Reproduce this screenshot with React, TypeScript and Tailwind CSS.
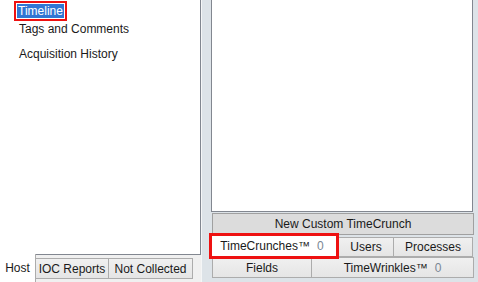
import React from 'react';

const tabBase =
  'flex items-center justify-center border border-[#acacac] bg-gradient-to-b from-[#f0f0f0] to-[#e5e5e5] text-[12px] text-[#1a1a1a] leading-none';

export default function App() {
  return (
    <div
      className="w-[478px] h-[282px] flex bg-[#f0f0f0] overflow-hidden"
      style={{ fontFamily: '"Liberation Sans", Arial, sans-serif' }}
    >
      {/* Left: host tree */}
      <div className="w-[201px] flex flex-col shrink-0">
        <div className="h-[255px] bg-white border-r border-b border-[#828790] text-[12px] text-[#1a1a1a] pl-[19px] pt-[4px]">
          <div className="h-[14px] flex items-center">
            <span className="bg-[#3176d4] text-white px-[1px] -ml-[2px] leading-[14px] outline-2 outline-[#ee1111] outline-offset-[1px]">
              Timeline
            </span>
          </div>
          <div className="h-[20px] flex items-center mt-[1px]">Tags and Comments</div>
          <div className="h-[20px] flex items-center mt-[5px]">Acquisition History</div>
        </div>
        <div className="flex items-start -mt-[1px]">
          <div className="w-[36px] h-[28px] bg-white border-r border-[#acacac] flex items-center justify-center text-[12px] text-[#1a1a1a] pb-[1px]">
            Host
          </div>
          <div className={`${tabBase} w-[73px] h-[21px] mt-[4px] border-l-0`}>IOC Reports</div>
          <div className={`${tabBase} w-[84px] h-[21px] mt-[4px] border-l-0`}>Not Collected</div>
        </div>
      </div>

      {/* Splitter */}
      <div className="w-[9px] shrink-0 bg-[#dde3e8] border-l border-[#f5f6f7]" />

      {/* Right: timecrunch list */}
      <div className="flex-1 flex flex-col bg-[#dde3e8] pl-[1px]">
        <div className="h-[212px] w-[262px] bg-white border border-t-0 border-[#828790]" />
        <div className="w-[262px] h-[22px] mt-[1px] ml-[1px] bg-[#dcdcdc] border border-[#a0a0a0] flex items-center justify-center text-[12px] text-[#1a1a1a]">
          New Custom TimeCrunch
        </div>
        <div className="flex items-start -ml-[2px]">
          <div className="w-[130px] h-[26px] -mt-[2px] bg-white border-[3px] border-[#ee1111] flex items-center justify-center pr-[4px] text-[12px] text-[#1a1a1a] relative z-10">
            TimeCrunches™<span className="ml-[7px] text-[#7a8794]">0</span>
          </div>
          <div className={`${tabBase} w-[55px] h-[20px] mt-[2px] border-l-0`}>Users</div>
          <div className={`${tabBase} w-[79px] h-[20px] mt-[2px] border-l-0`}>Processes</div>
        </div>
        <div className="flex ml-[1px] -mt-[2px]">
          <div className={`${tabBase} w-[100px] h-[21px]`}>Fields</div>
          <div className={`${tabBase} w-[162px] h-[21px] border-l-0`}>
            TimeWrinkles™<span className="ml-[7px] text-[#7a8794]">0</span>
          </div>
        </div>
      </div>
    </div>
  );
}
